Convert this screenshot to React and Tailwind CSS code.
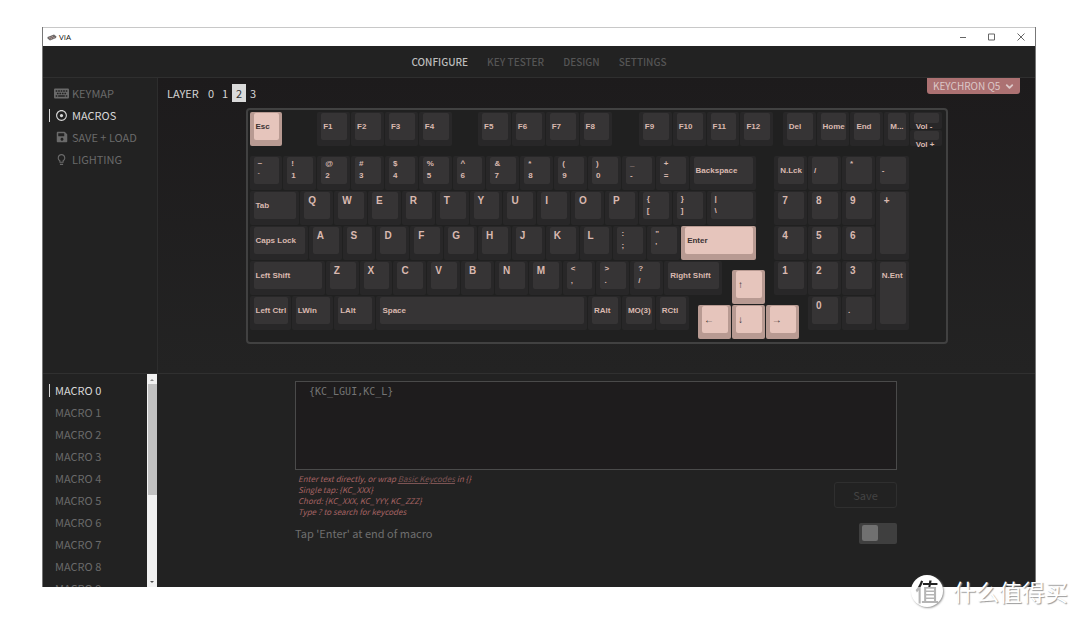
import { useState } from "react";
import { FaKeyboard, FaSave } from "react-icons/fa";
import { MdAdjust, MdLightbulbOutline } from "react-icons/md";
import { ChevronDown } from "lucide-react";

// [column, row, legend, width, height, style] measured in key units
const KEYS = [
  [0, 0, "Esc", 1, 1, "accent"],
  [2, 0, "F1"], [3, 0, "F2"], [4, 0, "F3"], [5, 0, "F4"],
  [6.75, 0, "F5"], [7.75, 0, "F6"], [8.75, 0, "F7"], [9.75, 0, "F8"],
  [11.5, 0, "F9"], [12.5, 0, "F10"], [13.5, 0, "F11"], [14.5, 0, "F12"],
  [15.75, 0, "Del"], [16.75, 0, "Home"], [17.75, 0, "End"], [18.75, 0, "M...", 0.75],
  [19.5, 0, "Vol -", 1, 0.5], [19.5, 0.5, "Vol +", 1, 0.5],

  [0, 1.25, "~\n`"], [1, 1.25, "!\n1"], [2, 1.25, "@\n2"], [3, 1.25, "#\n3"],
  [4, 1.25, "$\n4"], [5, 1.25, "%\n5"], [6, 1.25, "^\n6"], [7, 1.25, "&\n7"],
  [8, 1.25, "*\n8"], [9, 1.25, "(\n9"], [10, 1.25, ")\n0"], [11, 1.25, "_\n-"],
  [12, 1.25, "+\n="], [13, 1.25, "Backspace", 2],
  [15.5, 1.25, "N.Lck"], [16.5, 1.25, "/ "], [17.5, 1.25, "*\n "], [18.5, 1.25, "- "],

  [0, 2.25, "Tab", 1.5], [1.5, 2.25, "Q"], [2.5, 2.25, "W"], [3.5, 2.25, "E"],
  [4.5, 2.25, "R"], [5.5, 2.25, "T"], [6.5, 2.25, "Y"], [7.5, 2.25, "U"],
  [8.5, 2.25, "I"], [9.5, 2.25, "O"], [10.5, 2.25, "P"], [11.5, 2.25, "{\n["],
  [12.5, 2.25, "}\n]"], [13.5, 2.25, "|\n\\", 1.5],
  [15.5, 2.25, "7"], [16.5, 2.25, "8"], [17.5, 2.25, "9"], [18.5, 2.25, "+", 1, 2],

  [0, 3.25, "Caps Lock", 1.75], [1.75, 3.25, "A"], [2.75, 3.25, "S"], [3.75, 3.25, "D"],
  [4.75, 3.25, "F"], [5.75, 3.25, "G"], [6.75, 3.25, "H"], [7.75, 3.25, "J"],
  [8.75, 3.25, "K"], [9.75, 3.25, "L"], [10.75, 3.25, ":\n;"], [11.75, 3.25, "\"\n'"],
  [12.75, 3.25, "Enter", 2.25, 1, "accent"],
  [15.5, 3.25, "4"], [16.5, 3.25, "5"], [17.5, 3.25, "6"],

  [0, 4.25, "Left Shift", 2.25], [2.25, 4.25, "Z"], [3.25, 4.25, "X"], [4.25, 4.25, "C"],
  [5.25, 4.25, "V"], [6.25, 4.25, "B"], [7.25, 4.25, "N"], [8.25, 4.25, "M"],
  [9.25, 4.25, "<\n,"], [10.25, 4.25, ">\n."], [11.25, 4.25, "?\n/"],
  [12.25, 4.25, "Right Shift", 1.75], [14.25, 4.5, "↑", 1, 1, "arrow"],
  [15.5, 4.25, "1"], [16.5, 4.25, "2"], [17.5, 4.25, "3"], [18.5, 4.25, "N.Ent", 1, 2],

  [0, 5.25, "Left Ctrl", 1.25], [1.25, 5.25, "LWin", 1.25], [2.5, 5.25, "LAlt", 1.25],
  [3.75, 5.25, "Space", 6.25], [10, 5.25, "RAlt"], [11, 5.25, "MO(3)"], [12, 5.25, "RCtl"],
  [13.25, 5.5, "←", 1, 1, "arrow"], [14.25, 5.5, "↓", 1, 1, "arrow"], [15.25, 5.5, "→", 1, 1, "arrow"],
  [16.5, 5.25, "0"], [17.5, 5.25, ". "],
];

function Key({ data }) {
  const [x, y, legend, w = 1, h = 1, kind] = data;
  const accent = kind === "accent" || kind === "arrow";
  const place = {
    gridColumn: `${x * 4 + 1} / span ${w * 4}`,
    gridRow: `${y * 4 + 1} / span ${h * 4}`,
  };

  let text = "pl-[2px] pt-[9px] text-[8px] leading-[10px] font-bold";
  if (kind === "arrow") text = "pl-[2px] pt-[8px] text-[10px] leading-[12px]";
  else if (legend.includes("\n")) text = "pl-[4px] pt-px text-[8px] leading-[12px] font-bold";
  else if (legend.length === 1) text = "pl-[4px] pt-[3px] text-[10px] leading-[12px] font-bold";

  return (
    <button
      type="button"
      style={place}
      className={`mr-px mb-px flex rounded-[2px] pt-px pr-[3px] pb-[6px] pl-[4px] text-left ${
        accent ? "bg-[#b89a92] text-[#3a3233]" : "bg-[#282728] text-[#dab9b0]"
      }`}
    >
      <span
        className={`block h-full w-full rounded-[2px] whitespace-pre ${text} ${
          accent ? "bg-[#e6c5bc]" : "bg-[#363435]"
        }`}
      >
        {legend}
      </span>
    </button>
  );
}

function TitleBar() {
  return (
    <div className="flex h-[19px] shrink-0 items-center border-t border-[#c8c8c8] bg-white pl-[4px] text-[#111]">
      <svg viewBox="0 0 20 14" className="h-[7px] w-[10px]">
        <path d="M1 6 14 1l5 4-1 3L6 13 1 9z" fill="#6d6a6a" />
        <path d="M4 8l3-1M9 6l3-1M7 10l3-1M12 8l3-1" stroke="#d4a9a2" strokeWidth="1.5" />
      </svg>
      <span className="ml-[2px] font-['Open_Sans',sans-serif] text-[8px] font-medium">VIA</span>
      <div className="ml-auto flex items-center gap-[21px] pr-[10px] text-[#666]">
        <button type="button" aria-label="Minimize">
          <svg viewBox="0 0 8 8" className="size-[8px]" fill="none" stroke="currentColor">
            <path d="M1 4.5h6" />
          </svg>
        </button>
        <button type="button" aria-label="Maximize">
          <svg viewBox="0 0 8 8" className="size-[8px]" fill="none" stroke="currentColor">
            <path d="M.5 1h6v6h-6z" />
          </svg>
        </button>
        <button type="button" aria-label="Close">
          <svg viewBox="0 0 8 8" className="size-[8px]" fill="none" stroke="currentColor">
            <path d="M.5.5l7 7M7.5.5l-7 7" />
          </svg>
        </button>
      </div>
    </div>
  );
}

const TABS = ["CONFIGURE", "KEY TESTER", "DESIGN", "SETTINGS"];

const MENU = [
  { name: "KEYMAP", Icon: FaKeyboard, size: "size-[15px]" },
  { name: "MACROS", Icon: MdAdjust, size: "size-[13px]" },
  { name: "SAVE + LOAD", Icon: FaSave, size: "size-[12px]" },
  { name: "LIGHTING", Icon: MdLightbulbOutline, size: "size-[13px]" },
];

const MACROS = Array.from({ length: 10 }, (_, i) => `MACRO ${i}`);

export default function App() {
  const [menu, setMenu] = useState("MACROS");
  const [layer, setLayer] = useState(2);
  const [macro, setMacro] = useState(0);
  const [value, setValue] = useState("{KC_LGUI,KC_L}");
  const [tapEnter, setTapEnter] = useState(false);

  return (
    <div className="h-screen bg-white pt-[27px] pr-[44px] pb-[31px] pl-[42px] font-['Noto_Sans_CJK_SC',sans-serif]">
      <div className="flex h-full flex-col border-x border-[#777] bg-[#222]">
        <TitleBar />

        {/* Tabs */}
        <nav className="flex h-[32px] shrink-0 items-center justify-center gap-[19px] border-b border-[#2f2f2f] pb-px text-[10px] font-medium">
          {TABS.map((tab, i) => (
            <a key={tab} href="#" className={i === 0 ? "text-[#bdbdbd]" : "text-[#555]"}>
              {tab}
            </a>
          ))}
        </nav>

        {/* Top pane */}
        <div className="flex shrink-0 border-b border-[#303030]">
          <div className="w-[115px] shrink-0 border-r border-[#2d2d2d] pt-[4px]">
            {MENU.map(({ name, Icon, size }) => (
              <button
                key={name}
                type="button"
                onClick={() => setMenu(name)}
                className={`flex h-[22px] w-full items-center pl-[6px] text-[11px] ${
                  menu === name ? "text-[#d8d8d8]" : "text-[#6a6a6a]"
                }`}
              >
                <span className={`h-[13px] w-px ${menu === name ? "bg-[#d8d8d8]" : ""}`} />
                <span className="ml-[3px] flex w-[17px] justify-center">
                  <Icon className={size} />
                </span>
                <span className="ml-[2px]">{name}</span>
              </button>
            ))}
          </div>

          <div className="flex-1 bg-linear-to-b from-[#1d1b1c] to-[#232323] pb-[29px]">
            <div className="flex h-[30px] items-center pr-[15px] pl-[9px] text-[11px] text-[#d4d4d4]">
              <span className="w-[37px]">LAYER</span>
              {[0, 1, 2, 3].map((n) => (
                <button
                  key={n}
                  type="button"
                  onClick={() => setLayer(n)}
                  className={`h-[18px] w-[14px] leading-[18px] ${
                    layer === n ? "bg-[#dadada] text-[#333]" : ""
                  }`}
                >
                  {n}
                </button>
              ))}
              <div className="relative ml-auto self-start rounded-b-[3px] bg-[#ac7172] text-[#dcc8c8]">
                <select
                  aria-label="Keyboard"
                  className="block h-[16px] w-[93px] appearance-none pl-[6px] text-[10px] leading-[16px]"
                >
                  <option>KEYCHRON Q5</option>
                </select>
                <ChevronDown className="pointer-events-none absolute top-[3px] right-[5px] size-[11px]" strokeWidth={4} />
              </div>
            </div>

            {/* Keyboard */}
            <div className="mx-auto w-[702px] rounded-[4px] border-2 border-[#414141] bg-[#202020] p-[2px] font-['Liberation_Sans',sans-serif]">
              <div className="grid h-[228px] grid-cols-[repeat(82,minmax(0,1fr))] grid-rows-[repeat(26,minmax(0,1fr))]">
                {KEYS.map((k) => (
                  <Key key={`${k[0]}-${k[1]}`} data={k} />
                ))}
              </div>
            </div>
          </div>
        </div>

        {/* Bottom pane */}
        <div className="flex min-h-0 flex-1">
          <div className="flex w-[114px] shrink-0">
            <div className="flex-1 overflow-hidden pt-[5px]">
              {MACROS.map((name, i) => (
                <button
                  key={name}
                  type="button"
                  onClick={() => setMacro(i)}
                  className={`flex h-[22px] w-full items-center pl-[6px] text-[11px] ${
                    macro === i ? "text-[#d8d8d8]" : "text-[#6a6a6a]"
                  }`}
                >
                  <span className={`h-[13px] w-px ${macro === i ? "bg-[#d8d8d8]" : ""}`} />
                  <span className="ml-[5px]">{name}</span>
                </button>
              ))}
            </div>
            <div className="flex w-[10px] flex-col items-center bg-[#f1f1f1]">
              <svg viewBox="0 0 10 10" className="size-[10px]">
                <path d="M3 7l2-2 2 2z" fill="#8a8a8a" />
              </svg>
              <div className="h-[111px] w-[9px] bg-[#c1c1c1]" />
              <svg viewBox="0 0 10 10" className="mt-auto size-[10px]">
                <path d="M3 4l2 2 2-2z" fill="#505050" />
              </svg>
            </div>
          </div>

          <div className="flex-1 overflow-hidden pt-[7px]">
            <div className="mx-auto w-[602px]">
              <textarea
                aria-label="Macro"
                value={value}
                onChange={(e) => setValue(e.target.value)}
                spellCheck={false}
                className="block h-[89px] w-full resize-none border border-[#4a4a4a] bg-[#1e1c1d] px-[13px] py-[4px] font-['DejaVu_Sans_Mono',monospace] text-[10px] leading-[12px] text-[#747474]"
              />
              <div className="flex items-center justify-between pt-[3px]">
                <p className="pl-[3px] text-[8px] leading-[11px] text-[#a56362] italic">
                  Enter text directly, or wrap{" "}
                  <a href="#" className="text-[#7c5454] underline">
                    Basic Keycodes
                  </a>{" "}
                  in {"{}"}
                  <br />
                  Single tap: {"{KC_XXX}"}
                  <br />
                  Chord: {"{KC_XXX, KC_YYY, KC_ZZZ}"}
                  <br />
                  Type ? to search for keycodes
                </p>
                <button
                  type="button"
                  disabled
                  className="h-[26px] w-[63px] rounded-[3px] border border-[#2f2f2f] text-[11px] text-[#444]"
                >
                  Save
                </button>
              </div>
              <div className="mt-[5px] flex h-[22px] items-center justify-between">
                <label htmlFor="tap-enter" className="text-[11px] text-[#6f6f6f]">
                  Tap 'Enter' at end of macro
                </label>
                <input
                  id="tap-enter"
                  type="checkbox"
                  checked={tapEnter}
                  onChange={(e) => setTapEnter(e.target.checked)}
                  className="flex h-[21px] w-[38px] appearance-none items-center rounded-[2px] bg-[#3f3f3f] px-[3px] before:size-[16px] before:rounded-[2px] before:bg-[#707070] checked:justify-end"
                />
              </div>
            </div>
          </div>
        </div>
      </div>

      {/* Site watermark */}
      <div className="pointer-events-none absolute right-[12px] bottom-[11px] flex items-center gap-[10px]">
        <span className="flex size-[32px] items-center justify-center rounded-full bg-white shadow-[1px_1px_2px_#999]">
          <span className="bg-linear-to-b from-[#222] from-38% to-[#b5b5b5] to-38% bg-clip-text text-[24px] leading-[32px] font-medium text-transparent">
            值
          </span>
        </span>
        <span className="text-[23px] leading-[32px] text-white [text-shadow:1px_1px_1px_#999]">什么值得买</span>
      </div>
    </div>
  );
}
